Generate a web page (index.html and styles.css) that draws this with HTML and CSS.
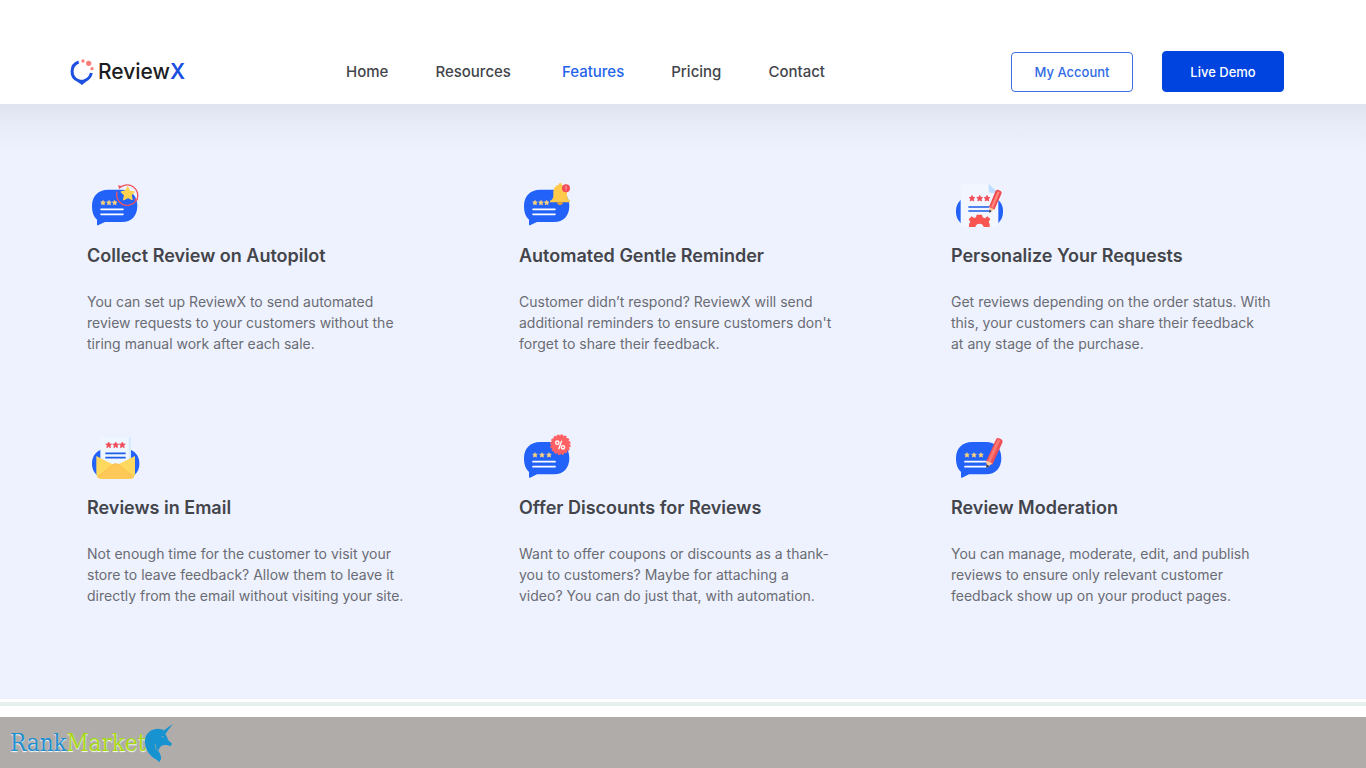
FILE: index.html
```html
<!DOCTYPE html>
<html lang="en">
<head>
<meta charset="utf-8">
<meta name="viewport" content="width=device-width, initial-scale=1">
<title>ReviewX Features</title>
<link rel="stylesheet" href="styles.css">
</head>
<body>
<svg class="defs" width="0" height="0" aria-hidden="true">
  <defs>
    <path id="star" stroke-width="2" stroke-linejoin="round" d="M0-7 2-2.5 7-2 3.2 1.4 4.4 6.4 0 3.8-4.4 6.4-3.2 1.4-7-2-2-2.5Z"/>
    <g id="bubble">
      <path fill="#2362f8" d="M84 44H126C155 44 172 64 172 92C172 122 155 141 126 141H75L54 151Q51 152 51 148V134C41 126 36 112 36 96V92C36 64 55 44 84 44Z"/>
      <g fill="#ffd37a" stroke="#ffd37a"><use href="#star" x="69" y="83"/><use href="#star" x="87" y="83"/><use href="#star" x="104" y="83"/></g>
      <path stroke="#fff" stroke-width="5" stroke-linecap="round" d="M63 103H129M63 118H129"/>
    </g>
    <g id="bubble-wide">
      <path fill="#2362f8" d="M84 42H126C155 42 172 62 172 90C172 120 155 139 126 139H75L54 149Q51 150 51 146V132C41 124 36 110 36 94V90C36 62 55 42 84 42Z"/>
      <g fill="#ffd37a" stroke="#ffd37a"><use href="#star" x="69" y="81"/><use href="#star" x="90" y="81"/><use href="#star" x="111" y="81"/></g>
      <path stroke="#fff" stroke-width="5" stroke-linecap="round" d="M63 101H129M63 116H129"/>
    </g>
  </defs>
</svg>

<header class="header">
  <a class="brand" href="#" aria-label="ReviewX">
    <svg class="brand-mark" viewBox="28 36 72 82" aria-hidden="true">
      <path fill="none" stroke="#1d4fe0" stroke-width="9" d="M54 47A30 30 0 0 0 53 103L64 110 74 102Q88 96 92 80"/>
      <path fill="#1d4fe0" d="M53 100H75L63 116Z"/>
      <g fill="#f97f7c"><circle cx="67" cy="44" r="5"/><circle cx="84" cy="51" r="8"/><circle cx="94" cy="67" r="5"/></g>
    </svg>
    <span class="brand-name">Review<span class="brand-x">X</span></span>
  </a>
  <nav class="nav" aria-label="Main">
    <a href="#">Home</a>
    <a class="nav-resources" href="#">Resources</a>
    <a class="nav-active" href="#" aria-current="page">Features</a>
    <a href="#">Pricing</a>
    <a href="#">Contact</a>
  </nav>
  <div class="actions">
    <button class="button button-outline" type="button">My Account</button>
    <button class="button button-solid" type="button">Live Demo</button>
  </div>
</header>

<main class="features">
  <article class="card">
    <svg class="icon" viewBox="21 15 165 150" aria-hidden="true">
      <use href="#bubble"/>
      <g fill="none" stroke="#f05260" stroke-width="4"><path d="M121 37A32 32 0 0 1 171 74M166 80A32 32 0 0 1 111 50"/></g>
      <path fill="#f05260" d="M114 31 126 33 118 43ZM163 70 174 74 166 81Z"/>
      <path fill="#ffd34f" stroke="#ffd34f" stroke-width="4" stroke-linejoin="round" d="M143 36 149 49 162 51 153 60 156 73 144 67 131 74 134 60 124 51 137 48Z"/>
    </svg>
    <h2>Collect Review on Autopilot</h2>
    <p>You can set up ReviewX to send automated<br>review requests to your customers without the<br>tiring manual work after each sale.</p>
  </article>
  <article class="card">
    <svg class="icon" viewBox="21 15 165 150" aria-hidden="true">
      <use href="#bubble"/>
      <path fill="#ffca4b" d="M139 30Q140 24 145 24 150 24 150 31 164 34 165 51V63Q166 72 174 77V82H114V77Q124 73 124 62V49Q126 33 139 30Z"/>
      <path fill="#e8a22d" d="M135 82H153Q152 90 144 90 136 90 135 82Z"/>
      <circle cx="162" cy="40" r="12" fill="#f34a58"/><path stroke="#ffb3b0" stroke-width="3" d="M162 33V42M162 44V47"/>
    </svg>
    <h2>Automated Gentle Reminder</h2>
    <p>Customer didn’t respond? ReviewX will send<br>additional reminders to ensure customers don't<br>forget to share their feedback.</p>
  </article>
  <article class="card">
    <svg class="icon" viewBox="21 15 165 150" aria-hidden="true">
      <rect x="36" y="64" width="141" height="91" rx="43" fill="#2362f8"/>
      <path fill="#f1f6ff" d="M50 40Q50 28 62 28H134L163 55V146Q163 156 153 156H60Q50 156 50 146Z"/>
      <path fill="#bddcff" d="M134 27 163 54H142Q134 54 134 46Z"/>
      <g fill="#f04c59" stroke="#f04c59"><use href="#star" transform="translate(84 70) scale(1.25)"/><use href="#star" transform="translate(107 70) scale(1.25)"/><use href="#star" transform="translate(129 70) scale(1.25)"/></g>
      <path stroke="#1f5ce8" stroke-width="5" d="M73 96H139M73 108H139"/>
      <path fill="#fa5551" d="M98 119H114L116 127 123 130 130 124 139 132 134 141 137 147V156H119A13 13 0 0 0 94 156H75V147L79 141 74 133 83 124 90 129 96 127Z"/>
      <path fill="#f04c51" d="M155 47Q158 42 164 45L170 48Q175 51 172 57L151 104 135 96Z"/>
      <path fill="#ff8a7e" d="M161 49 167 52 147 99 141 96Z"/>
      <path fill="#ffc69a" d="M135 96 151 103 137 113Z"/><path fill="#27345b" d="M136 104 143 108 136 114Z"/>
    </svg>
    <h2>Personalize Your Requests</h2>
    <p>Get reviews depending on the order status. With<br>this, your customers can share their feedback<br>at any stage of the purchase.</p>
  </article>
  <article class="card">
    <svg class="icon" viewBox="21 12 165 150" aria-hidden="true">
      <rect x="36" y="62" width="142" height="90" rx="43" fill="#2362f8"/>
      <path fill="#eef6ff" d="M61 36Q61 28 69 28H153V120H61Z"/><path fill="#d8ebff" d="M146 28H153V100H146Z"/>
      <g fill="#f04c59" stroke="#f04c59"><use href="#star" transform="translate(86 51) scale(1.25)"/><use href="#star" transform="translate(107 51) scale(1.25)"/><use href="#star" transform="translate(127 51) scale(1.25)"/></g>
      <path stroke="#1f5ce8" stroke-width="5" d="M76 76H137M76 89H137"/>
      <path fill="#ffd85f" d="M49 84 106 113 165 84V136Q165 153 148 153H66Q49 153 49 136Z"/>
      <path fill="#ffc95a" d="M52 147 98 110Q107 103 116 110L162 147Q157 153 148 153H66Q56 153 52 147Z"/>
      <path fill="none" stroke="#f5b73c" stroke-width="2" d="M53 147 98 110Q107 103 116 110L161 147"/>
    </svg>
    <h2>Reviews in Email</h2>
    <p>Not enough time for the customer to visit your<br>store to leave feedback? Allow them to leave it<br>directly from the email without visiting your site.</p>
  </article>
  <article class="card">
    <svg class="icon" viewBox="21 12 165 150" aria-hidden="true">
      <use href="#bubble-wide"/>
      <circle cx="145" cy="50" r="28" fill="#ff6264"/>
      <circle cx="145" cy="50" r="28" fill="none" stroke="#ff6264" stroke-width="6" stroke-dasharray="7 4"/>
      <g fill="none" stroke="#fff" stroke-width="4"><circle cx="136" cy="44" r="5"/><circle cx="153" cy="58" r="5"/><path d="M149 38 140 64"/></g>
    </svg>
    <h2>Offer Discounts for Reviews</h2>
    <p>Want to offer coupons or discounts as a thank-<br>you to customers? Maybe for attaching a<br>video? You can do just that, with automation.</p>
  </article>
  <article class="card">
    <svg class="icon" viewBox="21 12 165 150" aria-hidden="true">
      <use href="#bubble-wide"/>
      <path fill="#f04f57" d="M156 34Q159 28 165 31L172 34Q178 38 175 44L145 110 126 101Z"/>
      <path fill="#ff7974" d="M161 33 169 37 138 106 130 102Z"/>
      <path fill="#ffca9d" d="M127 98 145 106 128 120Z"/><path fill="#27345b" d="M127 109 136 114 127 121Z"/>
    </svg>
    <h2>Review Moderation</h2>
    <p>You can manage, moderate, edit, and publish<br>reviews to ensure only relevant customer<br>feedback show up on your product pages.</p>
  </article>
</main>

<div class="divider"></div>

<footer class="footer">
  <a class="market" href="#" aria-label="RankMarket">
    <span class="market-name"><span class="market-rank">Rank</span><span class="market-market">Market</span></span>
    <svg class="unicorn" viewBox="430 92 90 120" aria-hidden="true">
      <path fill="#1793d1" d="M516 95 494 125Q500 133 502 143L513 153Q514 159 508 161L498 158Q487 157 482 161 472 168 475 178 482 189 481 200L476 210 470 204Q449 194 439 174 428 149 436 131 447 109 473 109L489 112 486 117Z"/>
      <path stroke="#b0acaa" stroke-width="2" fill="none" d="M483 132 490 134M475 178Q463 170 463 155"/>
    </svg>
  </a>
</footer>
</body>
</html>
```
FILE: styles.css
```css
* {
  box-sizing: border-box;
}

body {
  margin: 0;
  min-height: 100vh;
  display: flex;
  flex-direction: column;
  background: #fff;
  color: #43454b;
  font-family: Inter, "Noto Sans", sans-serif;
}

a {
  color: inherit;
  text-decoration: none;
}

.defs {
  position: absolute;
}

.header {
  display: flex;
  align-items: center;
  height: 104px;
  padding: 39px 82px 0 70px;
}

.brand {
  display: flex;
  align-items: center;
  gap: 4px;
  width: 276px;
  color: #1c1d22;
}

.brand-mark {
  width: 24px;
  height: 28px;
}

.brand-name {
  font-size: 21px;
  font-weight: 500;
  line-height: 28px;
}

.brand-x {
  color: #1d4fe0;
  font-weight: 600;
}

.nav {
  display: flex;
  gap: 47px;
  font-size: 15px;
  font-weight: 500;
  line-height: 24px;
}

.nav-resources {
  margin-right: 4px;
}

.nav-active {
  color: #2363ec;
}

.actions {
  display: flex;
  align-items: center;
  gap: 29px;
  margin-left: auto;
}

.button {
  width: 122px;
  height: 41px;
  padding: 0;
  border: 1px solid #0044df;
  border-radius: 4px;
  font: 500 13px/20px Inter, sans-serif;
}

.button-outline {
  height: 40px;
  border-color: #3b6ee2;
  background: #fff;
  color: #316be5;
}

.button-solid {
  background: #0044df;
  color: #fff;
}

.features {
  flex: 1;
  display: grid;
  grid-template-columns: repeat(3, 1fr);
  align-content: start;
  gap: 78px 112px;
  padding: 76px 95px 90px 87px;
  background: linear-gradient(#dfe3ef, #e9edf9 24px, #eef2ff 52px);
}

.icon {
  display: block;
  width: 55px;
  height: 50px;
}

.card h2 {
  margin: 14px 0 23px;
  font-size: 18px;
  font-weight: 600;
  line-height: 24px;
  white-space: nowrap;
}

.card p {
  margin: 0;
  color: #6a6c73;
  font-size: 14px;
  line-height: 21px;
  white-space: nowrap;
}

.divider {
  height: 18px;
  background: linear-gradient(#fff 3px, #e6f0ef 3px, #e6f0ef 7px, #fff 7px);
}

.footer {
  display: flex;
  align-items: center;
  height: 51px;
  padding: 0 10px;
  background: #b0acaa;
}

.market {
  display: flex;
  align-items: center;
}

.market-name {
  font-family: "DejaVu Serif Condensed", "DejaVu Serif", serif;
  font-size: 24px;
  line-height: 32px;
  text-shadow: 0 1px 1px #fff;
}

.market-rank {
  color: #1f8fce;
}

.market-market {
  color: #a5d818;
}

.unicorn {
  width: 30px;
  height: 40px;
  margin-left: -3px;
}
```
